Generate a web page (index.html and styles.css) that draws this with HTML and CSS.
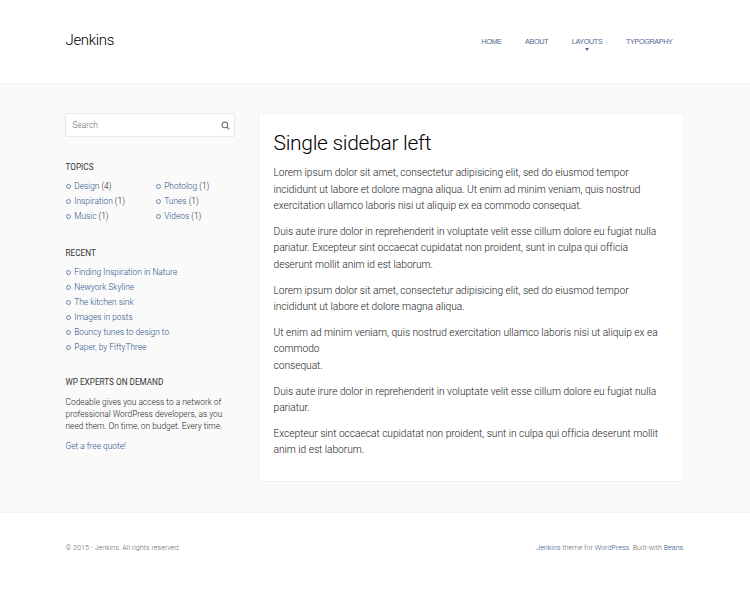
FILE: index.html
```html
<!DOCTYPE html>
<html lang="en">
<head>
<meta charset="utf-8">
<title>Jenkins</title>
<link rel="stylesheet" href="styles.css">
</head>
<body>
<header class="header"><div class="wrap header-row">
<a class="brand">Jenkins</a>
<nav class="nav"><a>Home</a><a>About</a><a class="has-menu">Layouts</a><a>Typography</a></nav>
</div></header>
<main class="main"><div class="wrap columns">
<aside class="sidebar">
<div class="search"><span>Search</span><svg width="9" height="9" viewBox="0 0 9 9"><circle cx="3.9" cy="3.9" r="2.8"/><path d="M6 6 8.3 8.3"/></svg></div>
<section class="topics"><h3>Topics</h3>
<div class="topic-grid"><ul><li><a>Design</a> (4)</li><li><a>Inspiration</a> (1)</li><li><a>Music</a> (1)</li></ul>
<ul><li><a>Photolog</a> (1)</li><li><a>Tunes</a> (1)</li><li><a>Videos</a> (1)</li></ul></div></section>
<section class="recent"><h3>Recent</h3>
<ul><li><a>Finding Inspiration in Nature</a></li><li><a>Newyork Skyline</a></li><li><a>The kitchen sink</a></li><li><a>Images in posts</a></li><li><a>Bouncy tunes to design to</a></li><li><a>Paper, by FiftyThree</a></li></ul></section>
<section class="experts"><h3>WP Experts on Demand</h3>
<p>Codeable gives you access to a network of<br>professional WordPress developers, as you<br>need them. On time, on budget. Every time.</p>
<p><a>Get a free quote!</a></p></section>
</aside>
<article class="article">
<h1>Single sidebar left</h1>
<p>Lorem ipsum dolor sit amet, consectetur adipisicing elit, sed do eiusmod tempor<br>incididunt ut labore et dolore magna aliqua. Ut enim ad minim veniam, quis nostrud<br>exercitation ullamco laboris nisi ut aliquip ex ea commodo consequat.</p>
<p>Duis aute irure dolor in reprehenderit in voluptate velit esse cillum dolore eu fugiat nulla<br>pariatur. Excepteur sint occaecat cupidatat non proident, sunt in culpa qui officia<br>deserunt mollit anim id est laborum.</p>
<p>Lorem ipsum dolor sit amet, consectetur adipisicing elit, sed do eiusmod tempor<br>incididunt ut labore et dolore magna aliqua.</p>
<p>Ut enim ad minim veniam, quis nostrud exercitation ullamco laboris nisi ut aliquip ex ea<br>commodo<br>consequat.</p>
<p>Duis aute irure dolor in reprehenderit in voluptate velit esse cillum dolore eu fugiat nulla<br>pariatur.</p>
<p>Excepteur sint occaecat cupidatat non proident, sunt in culpa qui officia deserunt mollit<br>anim id est laborum.</p>
</article>
</div></main>
<footer class="footer"><div class="wrap footer-row"><span>© 2015 - Jenkins. All rights reserved.</span><span class="credits"><a>Jenkins</a> theme for <a>WordPress</a>. Built-with <a>Beans</a>.</span></div></footer>
</body>
</html>
```
FILE: styles.css
```css
*, *::before { box-sizing: border-box; }
body { margin: 0; background: #fff; color: #222; font-family: Roboto, "Liberation Sans", sans-serif; font-weight: 300; white-space: nowrap; }
a { color: #2b5089; }
h1, h3, p, ul { margin: 0; padding: 0; }
.wrap { width: 619px; margin-left: 65px; }
.header { height: 83px; }
.header-row { display: flex; justify-content: space-between; }
.brand { margin: 30px 0 0 .5px; font-size: 15px; letter-spacing: -0.35px; line-height: 20px; color: #000; }
.nav { display: flex; gap: 23.6px; margin: 36px 11.5px 0 0; font-family: "Liberation Sans", sans-serif; font-size: 7.2px; letter-spacing: -0.34px; line-height: 12px; text-transform: uppercase; font-weight: 400; }
.nav a { position: relative; color: #4c6a94; }
.has-menu::after { content: ""; position: absolute; left: 50%; top: 12px; margin-left: -2px; border: 2.5px solid transparent; border-top: 3px solid #4b6a9b; border-bottom: 0; }
.main { height: 430px; background: #fafafa; border-top: 1px solid #f2f2f2; border-bottom: 1px solid #f2f2f2; padding-top: 29px; }
.columns { display: flex; justify-content: space-between; }
.sidebar { width: 170px; font-size: 8.4px; line-height: 12px; }
.search { height: 24px; border: 1px solid #e8e8e8; border-radius: 2px; background: #fff; padding: 0 4px 0 6.5px; display: flex; align-items: center; justify-content: space-between; color: #666; }
.search svg { fill: none; stroke: #777; stroke-width: 1.1; }
h3 { font-size: 8.2px; line-height: 12px; font-weight: 400; text-transform: uppercase; color: #333; }
.topics, .recent, .experts { padding-left: .5px; }
.topics { margin-top: 23.6px; }
.topic-grid { display: grid; grid-template-columns: 90px 1fr; }
ul { list-style: none; margin-top: 6.4px; }
li { height: 14.9px; line-height: 15px; padding-left: 8.7px; position: relative; }
li::before { content: ""; position: absolute; left: 0; top: 5px; width: 5px; height: 5px; border: 1px solid #6d87ad; border-radius: 50%; }
.recent { margin-top: 23.3px; }
.experts { margin-top: 21px; }
.experts p { margin-top: 8.3px; }
.article { width: 426px; height: 369px; background: #fff; border: 1px solid #f2f2f2; padding: 16px 14.5px; font-size: 10.2px; letter-spacing: -0.02px; line-height: 16.6px; }
h1 { font-size: 21px; letter-spacing: -0.3px; line-height: 26px; font-weight: 300; color: #000; margin-bottom: 9px; }
.article p { margin-bottom: 9px; }
.footer-row { display: flex; justify-content: space-between; padding-top: 28px; font-size: 7.2px; line-height: 14px; color: #666; }
.footer-row > span { margin-left: .5px; }
.footer-row .credits { margin-right: -1px; }
```
